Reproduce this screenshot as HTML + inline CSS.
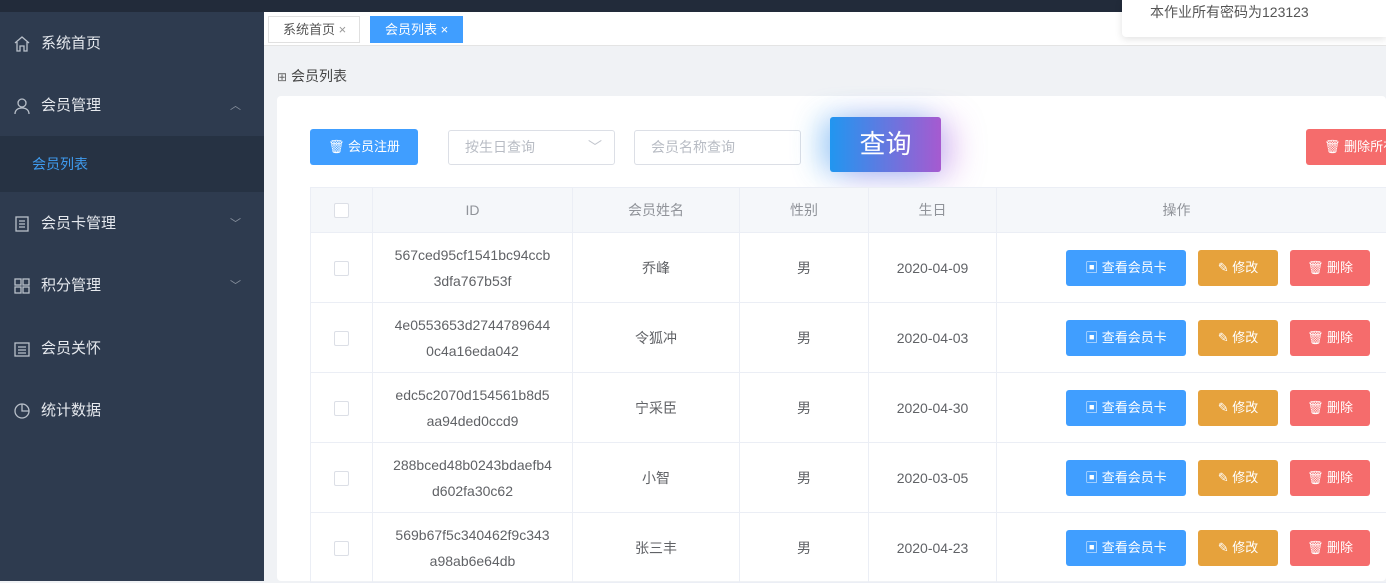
<!DOCTYPE html>
<html><head><meta charset="utf-8"><style>
*{margin:0;padding:0;box-sizing:border-box}
body{width:1386px;height:581px;overflow:hidden;background:#f0f2f5;font-family:"Liberation Sans","Noto Sans CJK SC",sans-serif;position:relative;font-size:14px;color:#606266}
.top{position:absolute;left:0;top:0;width:1386px;height:12px;background:#222b3a}
.side{position:absolute;left:0;top:12px;width:264px;height:569px;background:#2e3b4f}
.mi{position:absolute;left:0;width:264px;height:62px;color:#e6e9ee;font-size:15px;line-height:62px;padding-left:41px}
.mi svg{position:absolute;left:13px;top:22px}
.arr{position:absolute;left:230px;top:0;color:#8a93a0;font-size:11px}
.sub{position:absolute;left:0;top:124px;width:264px;height:56px;background:#263243;color:#3f9cf0;font-size:14px;line-height:56px;padding-left:32px}
.tabs{position:absolute;left:264px;top:12px;width:1122px;height:34px;background:#fff;border-bottom:1px solid #e4e4e4}
.tab{position:absolute;top:4px;height:27px;line-height:25px;font-size:13px;padding:0 0 0 14px;border:1px solid #e0e0e0;color:#555;background:#fff}
.note{position:absolute;left:1122px;top:0;width:264px;height:37px;background:#fff;box-shadow:0 2px 8px rgba(0,0,0,.12);border-radius:0 0 0 4px;color:#555;font-size:14px;padding:2px 0 0 28px}
.bc{position:absolute;left:277px;top:66px;font-size:14px;color:#444}
.card{position:absolute;left:277px;top:96px;width:1109px;height:485px;background:#fff;border-radius:4px}
.btn{position:absolute;border-radius:3px;color:#fff;font-size:13px;text-align:center}
.inp{position:absolute;top:130px;height:35px;border:1px solid #dcdfe6;border-radius:3px;background:#fff;color:#b8bcc4;font-size:14px;line-height:33px;padding-left:16px}
table{position:absolute;left:310px;top:187px;width:1106px;border-collapse:collapse;table-layout:fixed}
td,th{border:1px solid #ebeef5;text-align:center;font-size:14px;color:#606266}
th{height:45px;background:#f5f7fa;font-weight:normal;color:#909399}
td{height:70px;line-height:26px}
.cb{display:inline-block;width:15px;height:15px;border:1px solid #dcdfe6;border-radius:2px;background:#fff;vertical-align:middle}
.ops{text-align:left;padding-left:69px;white-space:nowrap}
.ob{display:inline-block;height:36px;line-height:36px;border-radius:3px;color:#fff;font-size:13px;vertical-align:middle;margin-right:12px;text-align:center}
</style></head><body>
<div class="top"></div>
<div class="side">
 <div class="mi" style="top:1px"><svg width="18" height="18" viewBox="0 0 18 18" fill="none" stroke="#b9c0ca" stroke-width="1.3"><path d="M2 8L9 2l7 6M4 7v9h3v-5h4v5h3V7"/></svg>系统首页</div>
 <div class="mi" style="top:63px"><svg width="18" height="18" viewBox="0 0 18 18" fill="none" stroke="#b9c0ca" stroke-width="1.3"><circle cx="9" cy="6" r="4"/><path d="M2 17c0-4 3-6 7-6s7 2 7 6"/></svg>会员管理<span class="arr">︿</span></div>
 <div class="sub">会员列表</div>
 <div class="mi" style="top:181px"><svg width="18" height="18" viewBox="0 0 18 18" fill="none" stroke="#b9c0ca" stroke-width="1.3"><rect x="3" y="2" width="12" height="14"/><path d="M6 6h6M6 9h6M6 12h6"/></svg>会员卡管理<span class="arr">﹀</span></div>
 <div class="mi" style="top:243px"><svg width="18" height="18" viewBox="0 0 18 18" fill="none" stroke="#b9c0ca" stroke-width="1.3"><rect x="2" y="2" width="6" height="6"/><rect x="10" y="2" width="6" height="6"/><rect x="2" y="10" width="6" height="6"/><rect x="10" y="10" width="6" height="6"/></svg>积分管理<span class="arr">﹀</span></div>
 <div class="mi" style="top:306px"><svg width="18" height="18" viewBox="0 0 18 18" fill="none" stroke="#b9c0ca" stroke-width="1.3"><rect x="2" y="3" width="14" height="13"/><path d="M5 7h8M5 10h8M5 13h8"/></svg>会员关怀</div>
 <div class="mi" style="top:368px"><svg width="18" height="18" viewBox="0 0 18 18" fill="none" stroke="#b9c0ca" stroke-width="1.3"><circle cx="9" cy="9" r="7"/><path d="M9 2v7h7"/></svg>统计数据</div>
</div>
<div class="tabs">
 <div class="tab" style="left:4px;width:92px">系统首页 <span style="color:#999">×</span></div>
 <div class="tab" style="left:106px;width:93px;background:#409eff;border-color:#409eff;color:#fff">会员列表 ×</div>
</div>
<div class="note">本作业所有密码为123123</div>
<div class="bc"><span style="font-size:12px;color:#666">⊞</span> 会员列表</div>
<div class="card"></div>
<div class="btn" style="left:310px;top:129px;width:108px;height:36px;line-height:36px;background:#409eff">🗑︎ 会员注册</div>
<div class="inp" style="left:448px;width:167px">按生日查询<span style="position:absolute;right:12px;color:#c0c4cc">﹀</span></div>
<div class="inp" style="left:634px;width:167px">会员名称查询</div>
<div style="position:absolute;left:830px;top:117px;width:111px;height:55px;border-radius:8px;box-shadow:-10px 0 28px rgba(60,160,240,.45),14px 4px 30px rgba(180,90,220,.35)"></div>
<div class="btn" style="left:830px;top:117px;width:111px;height:55px;line-height:55px;font-size:26px;background:linear-gradient(90deg,#2196f0,#a65ad0)">查询</div>
<div class="btn" style="left:1306px;top:129px;width:90px;height:36px;line-height:36px;background:#f56c6c;text-align:left;padding-left:18px;white-space:nowrap;overflow:hidden">🗑︎ 删除所有</div>
<table>
<colgroup><col style="width:62px"><col style="width:200px"><col style="width:167px"><col style="width:129px"><col style="width:128px"><col style="width:420px"></colgroup>
<tr><th><span class="cb"></span></th><th>ID</th><th>会员姓名</th><th>性别</th><th>生日</th><th style="padding-right:60px">操作</th></tr>
<tr><td><span class="cb"></span></td><td>567ced95cf1541bc94ccb<br>3dfa767b53f</td><td>乔峰</td><td>男</td><td>2020-04-09</td><td class="ops"><span class="ob" style="width:120px;background:#409eff">▣ 查看会员卡</span><span class="ob" style="width:80px;background:#e6a23c">✎ 修改</span><span class="ob" style="width:80px;background:#f56c6c">🗑︎ 删除</span></td></tr>
<tr><td><span class="cb"></span></td><td>4e0553653d2744789644<br>0c4a16eda042</td><td>令狐冲</td><td>男</td><td>2020-04-03</td><td class="ops"><span class="ob" style="width:120px;background:#409eff">▣ 查看会员卡</span><span class="ob" style="width:80px;background:#e6a23c">✎ 修改</span><span class="ob" style="width:80px;background:#f56c6c">🗑︎ 删除</span></td></tr>
<tr><td><span class="cb"></span></td><td>edc5c2070d154561b8d5<br>aa94ded0ccd9</td><td>宁采臣</td><td>男</td><td>2020-04-30</td><td class="ops"><span class="ob" style="width:120px;background:#409eff">▣ 查看会员卡</span><span class="ob" style="width:80px;background:#e6a23c">✎ 修改</span><span class="ob" style="width:80px;background:#f56c6c">🗑︎ 删除</span></td></tr>
<tr><td><span class="cb"></span></td><td>288bced48b0243bdaefb4<br>d602fa30c62</td><td>小智</td><td>男</td><td>2020-03-05</td><td class="ops"><span class="ob" style="width:120px;background:#409eff">▣ 查看会员卡</span><span class="ob" style="width:80px;background:#e6a23c">✎ 修改</span><span class="ob" style="width:80px;background:#f56c6c">🗑︎ 删除</span></td></tr>
<tr><td><span class="cb"></span></td><td>569b67f5c340462f9c343<br>a98ab6e64db</td><td>张三丰</td><td>男</td><td>2020-04-23</td><td class="ops"><span class="ob" style="width:120px;background:#409eff">▣ 查看会员卡</span><span class="ob" style="width:80px;background:#e6a23c">✎ 修改</span><span class="ob" style="width:80px;background:#f56c6c">🗑︎ 删除</span></td></tr>
</table>
</body></html>
